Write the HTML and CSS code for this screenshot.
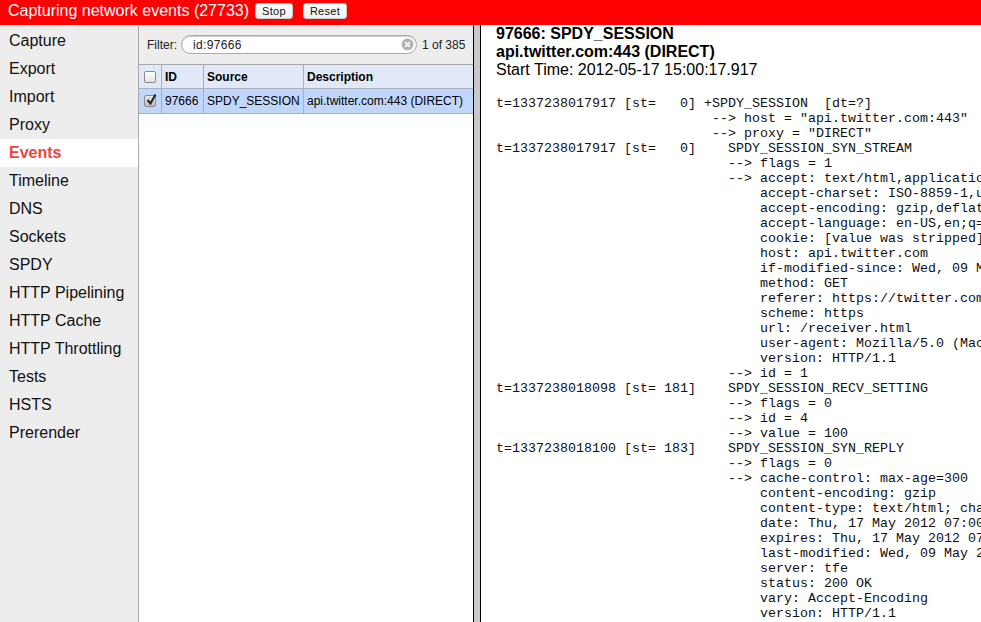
FILE: index.html
```
<!DOCTYPE html>
<html lang="en">
<head>
<meta charset="utf-8">
<title>net-internals</title>
<link rel="stylesheet" href="styles.css">
</head>
<body>
<header class="topbar">
  <span class="status">Capturing network events (27733)</span>
  <button class="top-btn">Stop</button>
  <button class="top-btn">Reset</button>
</header>
<div class="main">
  <nav class="sidebar">
    <a>Capture</a><a>Export</a><a>Import</a><a>Proxy</a>
    <a class="active">Events</a>
    <a>Timeline</a><a>DNS</a><a>Sockets</a><a>SPDY</a><a>HTTP Pipelining</a><a>HTTP Cache</a><a>HTTP Throttling</a><a>Tests</a><a>HSTS</a><a>Prerender</a>
  </nav>
  <section class="events">
    <div class="filter">
      <span>Filter:</span>
      <div class="search">
        <span class="search-text">id:97666</span>
        <svg class="clear" width="13" height="13" viewBox="0 0 13 13"><circle cx="6.5" cy="6.5" r="6" fill="#b4b4b4"/><path d="M4.2 4.2l4.6 4.6M8.8 4.2l-4.6 4.6" stroke="#fff" stroke-width="1.6"/></svg>
      </div>
      <span class="count">1 of 385</span>
    </div>
    <div class="row head">
      <div class="c c0"><span class="box"></span></div>
      <div class="c c1">ID</div>
      <div class="c c2">Source</div>
      <div class="c c3">Description</div>
    </div>
    <div class="row sel">
      <div class="c c0"><span class="box checked"><svg width="15" height="15" viewBox="0 0 15 15"><path d="M3.5 7l3 3.5L11.5 1.5" fill="none" stroke="#222" stroke-width="2"/></svg></span></div>
      <div class="c c1">97666</div>
      <div class="c c2">SPDY_SESSION</div>
      <div class="c c3">api.twitter.com:443 (DIRECT)</div>
    </div>
  </section>
  <div class="splitter"></div>
  <section class="details">
    <h1>97666: SPDY_SESSION<br>api.twitter.com:443 (DIRECT)</h1>
    <p class="start">Start Time: 2012-05-17 15:00:17.917</p>
<pre class="log">t=1337238017917 [st=   0] +SPDY_SESSION  [dt=?]
                           --&gt; host = "api.twitter.com:443"
                           --&gt; proxy = "DIRECT"
t=1337238017917 [st=   0]    SPDY_SESSION_SYN_STREAM
                             --&gt; flags = 1
                             --&gt; accept: text/html,application/xhtml+xml
                                 accept-charset: ISO-8859-1,utf-8
                                 accept-encoding: gzip,deflate,sdch
                                 accept-language: en-US,en;q=0.8
                                 cookie: [value was stripped]
                                 host: api.twitter.com
                                 if-modified-since: Wed, 09 May 2012
                                 method: GET
                                 referer: https://twitter.com/
                                 scheme: https
                                 url: /receiver.html
                                 user-agent: Mozilla/5.0 (Macintosh
                                 version: HTTP/1.1
                             --&gt; id = 1
t=1337238018098 [st= 181]    SPDY_SESSION_RECV_SETTING
                             --&gt; flags = 0
                             --&gt; id = 4
                             --&gt; value = 100
t=1337238018100 [st= 183]    SPDY_SESSION_SYN_REPLY
                             --&gt; flags = 0
                             --&gt; cache-control: max-age=300
                                 content-encoding: gzip
                                 content-type: text/html; charset=utf-8
                                 date: Thu, 17 May 2012 07:00:18 GMT
                                 expires: Thu, 17 May 2012 07:05:18
                                 last-modified: Wed, 09 May 2012
                                 server: tfe
                                 status: 200 OK
                                 vary: Accept-Encoding
                                 version: HTTP/1.1</pre>
  </section>
</div>
</body>
</html>
```
FILE: styles.css
```
* { box-sizing: border-box; }
html, body { margin: 0; height: 100%; overflow: hidden; }
body {
  width: 981px;
  height: 622px;
  display: flex;
  flex-direction: column;
  font-family: "Liberation Sans", Arial, sans-serif;
  background: #fff;
  color: #000;
}
.topbar {
  height: 25px;
  flex: none;
  background: #f00;
  color: #fff;
  display: flex;
  align-items: center;
  padding: 0 0 3px 8px;
  font-size: 16px;
}
.status { margin-right: 6px; }
.top-btn {
  height: 16px;
  padding: 0 6px;
  margin-right: 10px;
  border: 1px solid #c8c8c8;
  border-radius: 3px;
  background: linear-gradient(#fff, #f0f0f0);
  font: 11px "Liberation Sans", Arial, sans-serif;
  letter-spacing: 0.3px;
  color: #111;
}
.main { flex: 1; display: flex; min-height: 0; }
.sidebar {
  width: 139px;
  flex: none;
  background: #ededed;
  border-right: 1px solid #a9a9a9;
  padding-top: 2px;
  display: flex;
  flex-direction: column;
}
.sidebar a {
  height: 28px;
  line-height: 27px;
  padding-left: 9px;
  font-size: 16px;
  color: #111;
}
.sidebar a.active {
  background: #fff;
  color: #e8453c;
  font-weight: bold;
}
.events { width: 334px; flex: none; background: #fff; font-size: 12px; }
.filter {
  height: 39px;
  background: #ededed;
  display: flex;
  align-items: center;
  padding: 0 0 0 8px;
  color: #222;
}
.search {
  width: 236px;
  height: 19px;
  margin: 0 5px 0 4px;
  border: 1px solid #aaa;
  border-radius: 10px;
  background: #fff;
  box-shadow: inset 0 1px 1px #ccc;
  display: flex;
  align-items: center;
  justify-content: space-between;
  padding: 0 0 0 11px;
  letter-spacing: 0.35px;
}
.clear { margin-right: 2px; }
.row { display: flex; height: 25px; border-bottom: 1px solid #a9b0bb; }
.head { background: #e1e9f8; border-top: 1px solid #a9a9a9; font-weight: bold; }
.sel { background: #c0d7fb; }
.c {
  display: flex;
  align-items: center;
  padding-left: 3px;
  border-right: 1px solid #a9b0bb;
  white-space: nowrap;
  overflow: hidden;
}
.c0 { width: 23px; padding-left: 5px; }
.c1 { width: 42px; }
.c2 { width: 100px; }
.c3 { flex: 1; border-right: 0; }
.box {
  position: relative;
  width: 12px;
  height: 12px;
  border: 1px solid #8a8a8a;
  border-radius: 2px;
  background: linear-gradient(#fff, #e4e4e4);
}
.box svg { position: absolute; left: -1px; top: -3px; }
.box.checked { background: linear-gradient(#e8e8e8, #bbb); }
.splitter {
  width: 8px;
  flex: none;
  background: #c8c8c8;
  border-left: 1px solid #000;
  border-right: 1px solid #000;
}
.details { flex: 1; min-width: 0; padding: 0 0 0 15px; overflow: hidden; }
.details h1 { margin: 0; font-size: 16px; line-height: 18px; font-weight: bold; }
.start { margin: 0 0 17px; font-size: 16px; line-height: 18px; }
.log {
  margin: 0;
  font: 13.333px/15px "Liberation Mono", "Courier New", monospace;
  white-space: pre;
  color: #111;
}
```
